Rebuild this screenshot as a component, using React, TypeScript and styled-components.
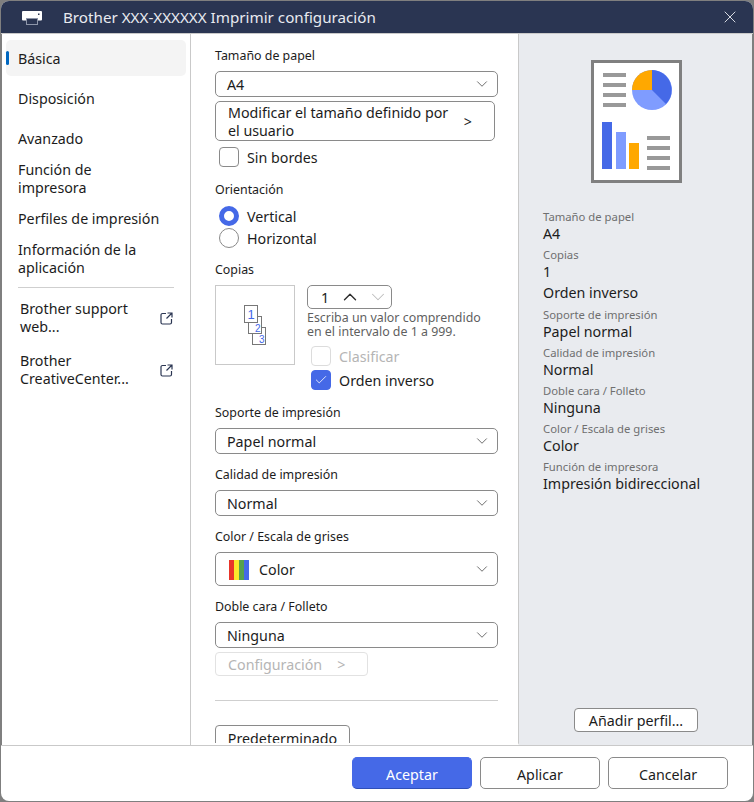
import styled, { createGlobalStyle } from "styled-components";
import { Check, ChevronDown, ChevronUp, X } from "lucide-react";

const GlobalStyle = createGlobalStyle`
  html, body {
    margin: 0;
    padding: 0;
    background: #7f7f7f;
    font-family: "Noto Sans", "Noto Sans CJK JP", sans-serif;
  }
  * { box-sizing: border-box; }
`;

const Desktop = styled.div`
  width: 754px;
  height: 802px;
  padding: 1px;
  background: #7f7f7f;
`;

const Window = styled.div`
  width: 752px;
  height: 800px;
  display: flex;
  flex-direction: column;
  background: #fff;
  border-radius: 8px;
  overflow: hidden;
`;

const TitleBar = styled.div`
  height: 33px;
  flex: none;
  display: flex;
  align-items: center;
  padding: 0 13px 0 21px;
  background: #2a3552;
  border-bottom: 1px solid #c9c9c9;
  color: #e8eaf0;
  font-size: 15.2px;
`;

const TitleText = styled.span`
  flex: 1;
  margin-left: 21px;
`;

const Body = styled.div`
  flex: 1;
  min-height: 0;
  display: flex;
  border-left: 1px solid #7f7f7f;
  border-right: 1px solid #7f7f7f;
`;

const Sidebar = styled.nav`
  width: 189px;
  flex: none;
  padding: 6px 4px 0;
  border-right: 1px solid #c9c9c9;
`;

const NavItem = styled.div<{ $active?: boolean; $tall?: boolean }>`
  position: relative;
  height: ${(p) => (p.$tall ? "40px" : "36px")};
  margin-bottom: ${(p) => (p.$tall ? "0" : "4px")};
  padding: ${(p) => (p.$tall ? "1px 12px 3px" : "10px 12px 8px")};
  font-size: 14.25px;
  line-height: 18px;
  color: #1c1c1c;
  border-radius: 5px;
  background: ${(p) => (p.$active ? "#f4f4f4" : "transparent")};

  &::before {
    content: "";
    display: ${(p) => (p.$active ? "block" : "none")};
    position: absolute;
    left: 0;
    top: 11px;
    width: 3px;
    height: 14px;
    border-radius: 2px;
    background: #0067c0;
  }
`;

const NavRule = styled.hr`
  height: 1px;
  margin: 7px 12px 8px;
  border: none;
  background: #cfcfcf;
`;

const LinkItem = styled.div`
  height: 44px;
  margin-bottom: 8px;
  padding: 0 13px 0 14px;
  display: flex;
  align-items: center;
  justify-content: space-between;
  font-size: 14.25px;
  line-height: 18px;
  color: #1c1c1c;
`;

const Main = styled.main`
  width: 328px;
  flex: none;
  overflow: hidden;
  padding: 12px 20px 0 24px;
  border-right: 1px solid #c9c9c9;
  border-bottom: 2px solid #fff;
`;

const FieldLabel = styled.div<{ $gap?: number; $tail?: number }>`
  height: 18px;
  margin-top: ${(p) => p.$gap ?? 0}px;
  margin-bottom: ${(p) => p.$tail ?? 7}px;
  font-size: 12.4px;
  line-height: 20px;
  color: #1c1c1c;
`;

const Select = styled.div<{ $tall?: boolean }>`
  width: 283px;
  height: ${(p) => (p.$tall ? "34px" : "26px")};
  padding: 1px 6px 0 ${(p) => (p.$tall ? "13px" : "11px")};
  display: flex;
  align-items: center;
  gap: 10px;
  border: 1px solid #8a8a8a;
  border-radius: 5px;
  font-size: 14.25px;
  color: #1c1c1c;

  svg:last-child {
    margin-left: auto;
    margin-top: -1px;
    color: #5f5f5f;
  }
`;

const SizeButton = styled.div`
  width: 280px;
  height: 40px;
  margin-top: 4px;
  padding: 2px 22px 0 12px;
  display: flex;
  align-items: center;
  justify-content: space-between;
  border: 1px solid #8a8a8a;
  border-radius: 5px;
  font-size: 14.25px;
  line-height: 18px;
  color: #1c1c1c;
`;

const OptionRow = styled.div<{ $disabled?: boolean; $gap?: number }>`
  height: 20px;
  margin-left: 4px;
  margin-top: ${(p) => p.$gap ?? 0}px;
  display: flex;
  align-items: center;
  gap: 8px;
  font-size: 14.25px;
  color: ${(p) => (p.$disabled ? "#b5b5b5" : "#1c1c1c")};
`;

const CheckBox = styled.span<{ $checked?: boolean; $disabled?: boolean }>`
  width: 20px;
  height: 20px;
  display: flex;
  align-items: center;
  justify-content: center;
  border: 1px solid ${(p) => (p.$checked ? "#4569e7" : p.$disabled ? "#dcdcdc" : "#8a8a8a")};
  border-radius: 4px;
  background: ${(p) => (p.$checked ? "#4569e7" : "#fff")};
  color: #fff;
`;

const Radio = styled.span<{ $checked?: boolean }>`
  width: 20px;
  height: 20px;
  border-radius: 50%;
  border: ${(p) => (p.$checked ? "5px solid #4569e7" : "1px solid #8a8a8a")};
  background: #fff;
`;

const CopiesRow = styled.div`
  display: flex;
  gap: 12px;
`;

const CopiesPreview = styled.div`
  width: 80px;
  height: 80px;
  flex: none;
  display: flex;
  align-items: center;
  justify-content: center;
  border: 1px solid #c9c9c9;
`;

const CopiesControls = styled.div`
  flex: 1;
`;

const Spinner = styled.div`
  width: 85px;
  height: 24px;
  padding-left: 13px;
  display: flex;
  align-items: center;
  border: 1px solid #8a8a8a;
  border-radius: 5px;
  font-size: 14.25px;
  color: #1c1c1c;
`;

const SpinnerValue = styled.span`
  width: 18px;
`;

const SpinnerUp = styled(ChevronUp)`
  color: #2c2c2c;
  margin-right: 6px;
`;

const SpinnerDown = styled(ChevronDown)`
  color: #bdbdbd;
`;

const Hint = styled.div`
  margin-top: 2px;
  font-size: 12.4px;
  line-height: 14px;
  color: #5f5f5f;
  white-space: nowrap;
`;

const DisabledButton = styled.div`
  width: 153px;
  height: 24px;
  margin-top: 4px;
  padding-left: 12px;
  display: flex;
  align-items: center;
  gap: 15px;
  border: 1px solid #e2e2e2;
  border-radius: 4px;
  font-size: 14.25px;
  color: #b5b5b5;
`;

const Divider = styled.hr`
  width: 283px;
  height: 1px;
  margin: 24px 0;
  border: none;
  background: #cfcfcf;
`;

const PlainButton = styled.div`
  width: 135px;
  height: 26px;
  display: flex;
  align-items: center;
  justify-content: center;
  border: 1px solid #8a8a8a;
  border-radius: 4px;
  font-size: 14.25px;
  color: #1c1c1c;
`;

const Summary = styled.aside`
  flex: 1;
  display: flex;
  flex-direction: column;
  padding: 26px 24px 13px;
  background: #e9ebef;
`;

const PreviewSlot = styled.div`
  display: flex;
  justify-content: center;
  padding-left: 2px;
  margin-bottom: 24px;
`;

const SummaryRow = styled.div<{ $solo?: boolean }>`
  margin-bottom: 2px;
  padding: ${(p) => (p.$solo ? "1px 0" : "0")};
`;

const SummaryLabel = styled.div`
  height: 18px;
  font-size: 11.3px;
  line-height: 20px;
  color: #6f6f6f;
`;

const SummaryValue = styled.div`
  font-size: 14.25px;
  line-height: 18px;
  color: #1c1c1c;
`;

const AddProfile = styled.div`
  width: 124px;
  height: 24px;
  margin: auto 0 0 31px;
  display: flex;
  align-items: center;
  justify-content: center;
  background: #fff;
  border: 1px solid #8a8a8a;
  border-radius: 4px;
  font-size: 14.25px;
  color: #1c1c1c;
`;

const Footer = styled.footer`
  height: 56px;
  flex: none;
  padding: 11px 25px 0 0;
  display: flex;
  justify-content: flex-end;
  gap: 8px;
  border-top: 1px solid #c9c9c9;
`;

const FooterButton = styled.div<{ $primary?: boolean }>`
  width: 120px;
  height: 32px;
  padding-top: 3px;
  display: flex;
  align-items: center;
  justify-content: center;
  border-radius: 5px;
  border: 1px solid ${(p) => (p.$primary ? "#4569e7" : "#8a8a8a")};
  border-bottom-color: ${(p) => (p.$primary ? "#2f4fb8" : "#8a8a8a")};
  background: ${(p) => (p.$primary ? "#4569e7" : "#fff")};
  color: ${(p) => (p.$primary ? "#fff" : "#1c1c1c")};
  font-size: 14.25px;
`;

const PrinterIcon = () => (
  <svg width="20" height="15" viewBox="0 0 20 15">
    <rect x="0" y="1" width="20" height="9.5" rx="1" fill="#fff" />
    <rect x="4.5" y="8.5" width="11" height="6" fill="#2a3552" stroke="#8e96aa" />
    <rect x="16" y="3.5" width="1.5" height="1.5" fill="#2a3552" />
  </svg>
);

const ExternalIcon = () => (
  <svg width="13" height="13" viewBox="0 0 13 13" fill="none" stroke="#2a3552" strokeWidth="1.2">
    <path d="M6 1.5H2.5a1.5 1.5 0 0 0-1.5 1.5v7.5a1.5 1.5 0 0 0 1.5 1.5H10a1.5 1.5 0 0 0 1.5-1.5V7" />
    <path d="M7.5 1h4.5v4.5M12 1L6.5 6.5" />
  </svg>
);

const CopiesIcon = () => (
  <svg width="22" height="40" viewBox="0 0 22 40" fontFamily="Liberation Sans, sans-serif" fill="#4569e7">
    <rect x="8.5" y="22.5" width="13" height="17" fill="#fff" stroke="#777" />
    <rect x="4.5" y="11.5" width="13" height="17" fill="#fff" stroke="#777" />
    <rect x="0.5" y="0.5" width="13" height="17" fill="#fff" stroke="#777" />
    <text x="3.5" y="14" fontSize="13">1</text>
    <text x="11" y="27" fontSize="10">2</text>
    <text x="15" y="38" fontSize="10">3</text>
  </svg>
);

const DocumentPreview = () => (
  <svg width="91" height="123" viewBox="0 0 91 123">
    <rect x="1.5" y="1.5" width="88" height="120" fill="#fff" stroke="#808080" strokeWidth="3" />
    <g fill="#999">
      <rect x="12" y="13" width="23" height="4" />
      <rect x="12" y="23" width="23" height="4" />
      <rect x="12" y="33" width="23" height="4" />
      <rect x="12" y="43" width="23" height="4" />
      <rect x="56" y="76" width="23" height="4" />
      <rect x="56" y="86" width="23" height="4" />
      <rect x="56" y="96" width="23" height="4" />
      <rect x="56" y="106" width="23" height="4" />
    </g>
    <circle cx="61" cy="30" r="20" fill="#7f9cff" />
    <path d="M61 30V10A20 20 0 0 1 75 44Z" fill="#4569e7" />
    <path d="M61 30H41A20 20 0 0 1 61 10Z" fill="#ffa800" />
    <rect x="11" y="62" width="10" height="47" fill="#4569e7" />
    <rect x="25" y="72" width="10" height="37" fill="#7f9cff" />
    <rect x="38" y="83" width="10" height="26" fill="#ffa800" />
  </svg>
);

const ColorSwatch = () => (
  <svg width="20" height="20" viewBox="0 0 20 20">
    <rect x="0" width="5" height="20" fill="#e8352a" />
    <rect x="5" width="5" height="20" fill="#fbe82c" />
    <rect x="10" width="5" height="20" fill="#56a14c" />
    <rect x="15" width="5" height="20" fill="#4569e7" />
  </svg>
);

const summary: [string, string][] = [
  ["Tamaño de papel", "A4"],
  ["Copias", "1"],
  ["", "Orden inverso"],
  ["Soporte de impresión", "Papel normal"],
  ["Calidad de impresión", "Normal"],
  ["Doble cara / Folleto", "Ninguna"],
  ["Color / Escala de grises", "Color"],
  ["Función de impresora", "Impresión bidireccional"],
];

const Chevron = () => <ChevronDown size={18} strokeWidth={1.2} />;

export default function App() {
  return (
    <Desktop>
      <GlobalStyle />
      <Window>
        <TitleBar>
          <PrinterIcon />
          <TitleText>Brother XXX-XXXXXX Imprimir configuración</TitleText>
          <X size={20} strokeWidth={1.1} />
        </TitleBar>
        <Body>
          <Sidebar>
            <NavItem $active>Básica</NavItem>
            <NavItem>Disposición</NavItem>
            <NavItem>Avanzado</NavItem>
            <NavItem $tall>Función de<br />impresora</NavItem>
            <NavItem>Perfiles de impresión</NavItem>
            <NavItem $tall>Información de la<br />aplicación</NavItem>
            <NavRule />
            <LinkItem>
              <span>Brother support<br />web...</span>
              <ExternalIcon />
            </LinkItem>
            <LinkItem>
              <span>Brother<br />CreativeCenter...</span>
              <ExternalIcon />
            </LinkItem>
          </Sidebar>
          <Main>
            <FieldLabel>Tamaño de papel</FieldLabel>
            <Select>A4<Chevron /></Select>
            <SizeButton>
              <span>Modificar el tamaño definido por<br />el usuario</span>
              <span>&gt;</span>
            </SizeButton>
            <OptionRow $gap={6}><CheckBox />Sin bordes</OptionRow>
            <FieldLabel $gap={13} $tail={8}>Orientación</FieldLabel>
            <OptionRow><Radio $checked />Vertical</OptionRow>
            <OptionRow $gap={2}><Radio />Horizontal</OptionRow>
            <FieldLabel $gap={12}>Copias</FieldLabel>
            <CopiesRow>
              <CopiesPreview><CopiesIcon /></CopiesPreview>
              <CopiesControls>
                <Spinner>
                  <SpinnerValue>1</SpinnerValue>
                  <SpinnerUp size={22} strokeWidth={1.5} />
                  <SpinnerDown size={22} strokeWidth={1.1} />
                </Spinner>
                <Hint>Escriba un valor comprendido<br />en el intervalo de 1 a 999.</Hint>
                <OptionRow $gap={7} $disabled><CheckBox $disabled />Clasificar</OptionRow>
                <OptionRow $gap={4}>
                  <CheckBox $checked><Check size={14} strokeWidth={1.4} /></CheckBox>
                  Orden inverso
                </OptionRow>
              </CopiesControls>
            </CopiesRow>
            <FieldLabel $gap={13}>Soporte de impresión</FieldLabel>
            <Select>Papel normal<Chevron /></Select>
            <FieldLabel $gap={11}>Calidad de impresión</FieldLabel>
            <Select>Normal<Chevron /></Select>
            <FieldLabel $gap={11}>Color / Escala de grises</FieldLabel>
            <Select $tall><ColorSwatch />Color<Chevron /></Select>
            <FieldLabel $gap={11}>Doble cara / Folleto</FieldLabel>
            <Select>Ninguna<Chevron /></Select>
            <DisabledButton>Configuración <span>&gt;</span></DisabledButton>
            <Divider />
            <PlainButton>Predeterminado</PlainButton>
          </Main>
          <Summary>
            <PreviewSlot><DocumentPreview /></PreviewSlot>
            {summary.map(([label, value]) => (
              <SummaryRow key={value} $solo={!label}>
                {label && <SummaryLabel>{label}</SummaryLabel>}
                <SummaryValue>{value}</SummaryValue>
              </SummaryRow>
            ))}
            <AddProfile>Añadir perfil...</AddProfile>
          </Summary>
        </Body>
        <Footer>
          <FooterButton $primary>Aceptar</FooterButton>
          <FooterButton>Aplicar</FooterButton>
          <FooterButton>Cancelar</FooterButton>
        </Footer>
      </Window>
    </Desktop>
  );
}
